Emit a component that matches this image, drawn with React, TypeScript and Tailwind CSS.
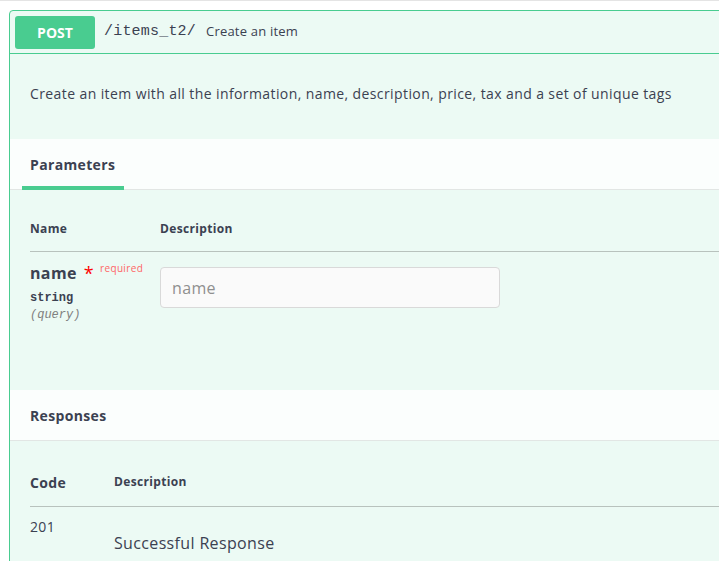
export default function App() {
  return (
    <div className="w-[719px] h-[561px] overflow-hidden bg-white border-t border-[#e4e4e4] font-['Open_Sans',sans-serif] text-[#3b4151] tracking-[0.35px]">
      <div className="pt-[9px] pl-[9px]">
        {/* Operation block */}
        <div className="w-[740px] border border-[#49cc90] rounded-[4px] bg-[#ecfaf4]">
          {/* Summary */}
          <div className="flex items-center h-[43px] px-[5px] border-b border-[#49cc90]">
            <span className="w-[80px] h-[33px] flex items-center justify-center rounded-[3px] bg-[#49cc90] text-white text-[14px] font-bold tracking-normal">
              POST
            </span>
            <span className="ml-[9px] font-['Liberation_Mono',monospace] text-[15px] tracking-[0.2px]">
              /items_t2/
            </span>
            <span className="ml-[10px] text-[13px] tracking-[0.2px]">Create an item</span>
          </div>

          {/* Description */}
          <div className="h-[85px] pt-[30px] px-[20px]">
            <p className="text-[14px] leading-[20px] tracking-[0.4px]">
              Create an item with all the information, name, description, price, tax and a set of unique tags
            </p>
          </div>

          {/* Parameters header */}
          <div className="h-[51px] bg-[#fbfefd] border-b border-[#e2e6e4] flex items-end px-[12px]">
            <div className="w-[102px] h-full flex items-center pl-[8px] relative">
              <span className="text-[14px] font-bold">Parameters</span>
              <span className="absolute left-0 right-0 -bottom-px h-[4px] bg-[#49cc90]" />
            </div>
          </div>

          {/* Parameters table */}
          <div className="pl-[20px] h-[200px]">
            <div className="flex pt-[31px] pb-[14px] text-[12px] leading-[16px] font-bold border-b border-[#b8c2bd]">
              <span className="w-[130px]">Name</span>
              <span>Description</span>
            </div>
            <div className="flex pt-[11px]">
              <div className="w-[130px]">
                <div className="flex items-start">
                  <span className="text-[16px] font-bold leading-[20px]">name</span>
                  <span className="ml-[7px] text-[18px] leading-[20px] text-[#ff0000]">*</span>
                  <span className="ml-[6px] text-[10px] leading-[14px] text-[#ff6666] -mt-[2px]">required</span>
                </div>
                <div className="mt-[7px] font-['Liberation_Mono',monospace] text-[12px] font-bold leading-[16px] tracking-normal">string</div>
                <div className="mt-[1px] font-['Liberation_Mono',monospace] text-[12px] italic text-[#808080] leading-[16px] tracking-normal">(query)</div>
              </div>
              <input
                placeholder="name"
                className="mt-[4px] w-[340px] h-[41px] rounded-[4px] border border-[#d9d9d9] bg-[#fafafa] px-[11px] text-[16px] placeholder:text-[#8f8f8f] outline-none"
              />
            </div>
          </div>

          {/* Responses header */}
          <div className="h-[51px] bg-[#fbfefd] border-b border-[#e2e6e4] flex items-center px-[20px]">
            <span className="text-[14px] font-bold">Responses</span>
          </div>

          {/* Responses table */}
          <div className="pl-[20px] pt-[29px] h-[200px]">
            <div className="flex items-center h-[24px] border-b border-[#b8c2bd] pb-[12px] box-content">
              <span className="w-[84px] text-[14px] font-bold">Code</span>
              <span className="text-[12px] font-bold">Description</span>
            </div>
            <div className="flex pt-[9px]">
              <span className="w-[84px] text-[14px]">201</span>
              <span className="mt-[15px] text-[16px]">Successful Response</span>
            </div>
          </div>
        </div>
      </div>
    </div>
  )
}
